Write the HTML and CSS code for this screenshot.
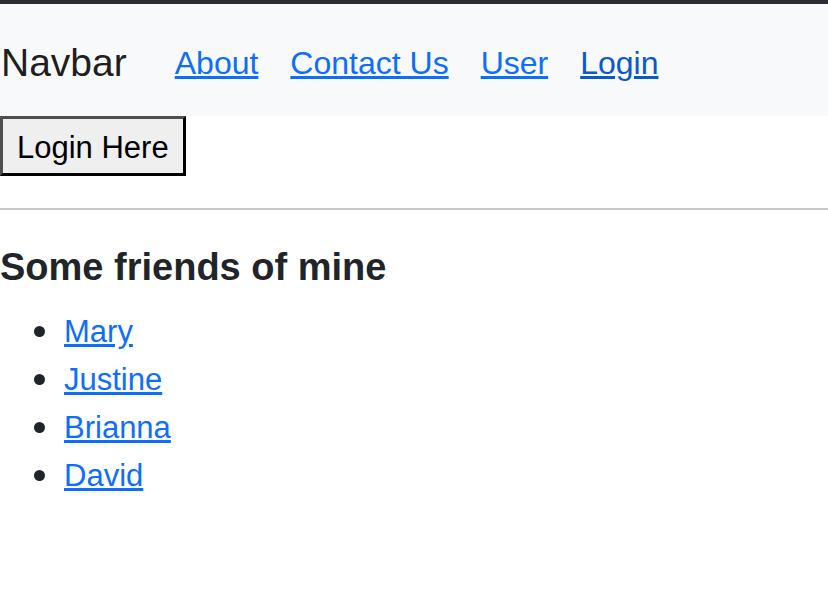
FILE: index.html
```html
<!DOCTYPE html>
<html lang="en">
<head>
<meta charset="utf-8">
<title>Navbar</title>
<link rel="stylesheet" href="styles.css">
</head>
<body>
<div class="topbar"></div>
<nav class="navbar">
  <a class="brand" href="#">Navbar</a>
  <ul class="nav-links">
    <li><a class="nav-link" href="#">About</a></li>
    <li><a class="nav-link" href="#">Contact Us</a></li>
    <li><a class="nav-link" href="#">User</a></li>
    <li><a class="nav-link active" href="#">Login</a></li>
  </ul>
</nav>
<div class="actions">
  <button class="login-btn" type="button">Login Here</button>
</div>
<hr class="divider">
<h5 class="title">Some friends of mine</h5>
<ul class="friends">
  <li><a href="#">Mary</a></li>
  <li><a href="#">Justine</a></li>
  <li><a href="#">Brianna</a></li>
  <li><a href="#">David</a></li>
</ul>
</body>
</html>
```

FILE: styles.css
```css
html, body {
  margin: 0;
  padding: 0;
  background: #fff;
}

body {
  font-family: "Liberation Sans", Arial, sans-serif;
  font-size: 32px;
  line-height: 48px;
  color: #212529;
}

.topbar {
  height: 4px;
  background: #2b2f33;
}

.navbar {
  display: flex;
  align-items: center;
  background: #f8f9fa;
  padding: 16px 0;
}

.brand {
  font-size: 39px;
  line-height: 60px;
  padding: 13px 0 7px;
  margin-right: 32px;
  margin-left: 1px;
  color: rgba(0, 0, 0, 0.9);
  text-decoration: none;
}

.nav-links {
  display: flex;
  list-style: none;
  margin: 0;
  padding: 0;
}

.nav-link {
  display: block;
  padding: 19px 16px 13px;
  font-size: 32px;
  line-height: 48px;
  color: #0d6efd;
}

.nav-link.active {
  color: #0a58ca;
}

.actions {
  display: flex;
}

.login-btn {
  font-family: inherit;
  font-size: 31px;
  line-height: 48px;
  margin: 0;
  padding: 5px 14px 1px;
  background: #efefef;
  color: #000;
  border-width: 3px;
  border-style: solid;
  border-color: #4f4f4f #000 #000 #4f4f4f;
  border-radius: 0;
}

.divider {
  margin: 32px 0;
  border: 0;
  border-top: 2px solid #c8c9ca;
  height: 0;
}

.title {
  margin: 0 0 16px;
  padding-top: 3px;
  font-size: 38px;
  font-weight: bold;
  line-height: 45px;
  color: #212529;
}

.friends {
  margin: 0 0 16px;
  padding-left: 64px;
  list-style: none;
}

.friends li {
  font-size: 31px;
  line-height: 45px;
  padding-top: 3px;
}

.friends li::before {
  content: "";
  display: inline-block;
  width: 11px;
  height: 11px;
  border-radius: 50%;
  background: #212529;
  margin-left: -30px;
  margin-right: 19px;
  vertical-align: 5px;
}

.friends a {
  color: #0d6efd;
}
```
